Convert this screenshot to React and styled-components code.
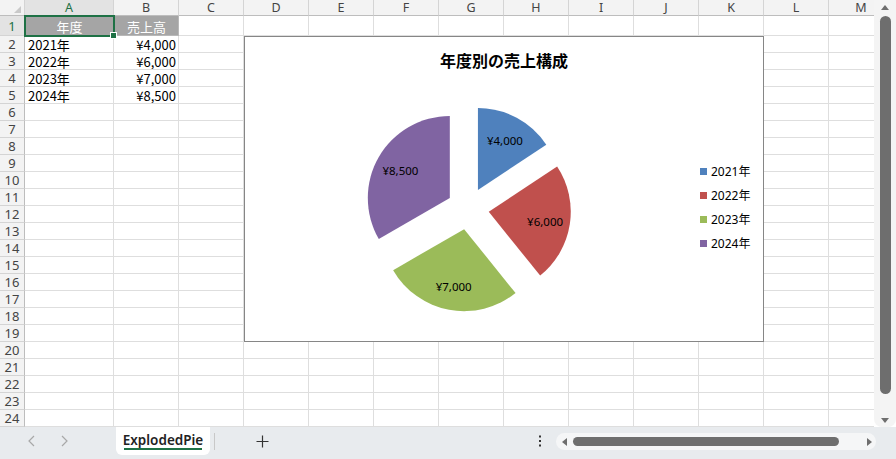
import React from 'react';
import styled, { createGlobalStyle } from 'styled-components';

const Global = createGlobalStyle`
  html, body { margin: 0; padding: 0; background: #fff; overflow: hidden; }
  body { font-family: "Noto Sans", "Noto Sans CJK JP", sans-serif; }
`;

const Page = styled.div`
  width: 896px;
  height: 459px;
  display: flex;
  flex-direction: column;
  background: #e8ebee;
`;

const Main = styled.div`
  display: flex;
  height: 427px;
  background: #fff;
`;

const SheetArea = styled.div`
  position: relative;
  width: 874px;
  height: 427px;
  overflow: hidden;
`;

const Grid = styled.div`
  display: grid;
  grid-template-columns: 25px 89px repeat(12, 65px);
  grid-template-rows: 16px 20px repeat(23, 17px);
`;

const Corner = styled.div`
  position: relative;
  box-sizing: border-box;
  background: #f3f3f3;
  border-right: 1px solid #d4d4d4;
  border-bottom: 1px solid #bdbdbd;
  &::after {
    content: "";
    position: absolute;
    right: 3px;
    bottom: 2px;
    width: 0;
    height: 0;
    border-left: 7px solid transparent;
    border-bottom: 7px solid #c9c9c9;
  }
`;

const ColHeader = styled.div`
  box-sizing: border-box;
  background: ${p => (p.$active ? '#e3e3e3' : '#f3f3f3')};
  border-right: 1px solid #d4d4d4;
  border-bottom: 1px solid ${p => (p.$active ? '#1e7145' : '#bdbdbd')};
  color: ${p => (p.$active ? '#1e7145' : '#444')};
  font: 12.5px/14px "Noto Sans", sans-serif;
  display: flex;
  align-items: center;
  justify-content: center;
  overflow: hidden;
`;

const RowHeader = styled.div`
  box-sizing: border-box;
  background: ${p => (p.$active ? '#e3e3e3' : '#f3f3f3')};
  border-right: 1px solid ${p => (p.$active ? '#1e7145' : '#bdbdbd')};
  border-bottom: 1px solid #d4d4d4;
  color: ${p => (p.$active ? '#1e7145' : '#444')};
  font: 13px/15px "Noto Sans", sans-serif;
  display: flex;
  align-items: center;
  justify-content: center;
  padding-top: 1px;
  overflow: hidden;
`;

const Cell = styled.div`
  box-sizing: border-box;
  border-right: 1px solid ${p => (p.$head ? '#b8b8b8' : '#dedede')};
  border-bottom: 1px solid ${p => (p.$head ? '#b8b8b8' : '#dedede')};
  background: ${p => (p.$head ? '#a5a5a5' : '#fff')};
  color: ${p => (p.$head ? '#fff' : '#000')};
  font: 13px/15px "Noto Sans CJK JP", sans-serif;
  display: flex;
  align-items: center;
  justify-content: ${p => (p.$align === 'right' ? 'flex-end' : p.$align === 'center' ? 'center' : 'flex-start')};
  padding: 1px 2px 0 3px;
  white-space: nowrap;
  overflow: hidden;
`;

const Selection = styled.div`
  position: absolute;
  left: 24px;
  top: 15px;
  width: 91px;
  height: 22px;
  box-sizing: border-box;
  border: 2px solid #1e7145;
  pointer-events: none;
  &::after {
    content: "";
    position: absolute;
    right: -4px;
    bottom: -4px;
    width: 5px;
    height: 5px;
    background: #1e7145;
    border: 1px solid #fff;
  }
`;

const Chart = styled.div`
  position: absolute;
  left: 244px;
  top: 36px;
  width: 520px;
  height: 306px;
  box-sizing: border-box;
  border: 1px solid #868686;
  background: #fff;
  display: flex;
  flex-direction: column;
`;

const Title = styled.div`
  padding-top: 13px;
  text-align: center;
  font: bold 16px/20px "Noto Sans CJK JP", sans-serif;
  color: #000;
`;

const ChartBody = styled.div`
  flex: 1;
  display: flex;
`;

const Legend = styled.div`
  margin-left: 15px;
  margin-top: 89px;
  display: flex;
  flex-direction: column;
`;

const LegendItem = styled.div`
  height: 24px;
  display: flex;
  align-items: center;
  gap: 4px;
  font: 12px "Noto Sans", "Noto Sans CJK JP", sans-serif;
  color: #000;
`;

const Swatch = styled.span`
  width: 7px;
  height: 7px;
  background: ${p => p.$color};
`;

const VScroll = styled.div`
  width: 22px;
  height: 427px;
  background: #f4f4f4;
  border-radius: 0 0 8px 8px;
  display: flex;
  flex-direction: column;
  align-items: center;
`;

const ArrowUp = styled.div`
  margin-top: 5px;
  width: 0;
  height: 0;
  border-left: 4px solid transparent;
  border-right: 4px solid transparent;
  border-bottom: 5px solid #6e6e6e;
`;

const ArrowDown = styled.div`
  margin-top: auto;
  margin-bottom: 4px;
  width: 0;
  height: 0;
  border-left: 4px solid transparent;
  border-right: 4px solid transparent;
  border-top: 5px solid #6e6e6e;
`;

const VThumb = styled.div`
  margin-top: 6px;
  width: 11px;
  height: 378px;
  border-radius: 6px;
  background: #6e6e6e;
`;

const Bottom = styled.div`
  height: 32px;
  display: flex;
  align-items: flex-start;
`;

const Nav = styled.div`
  width: 116px;
  height: 28px;
  display: flex;
  align-items: center;
  padding-left: 27px;
  box-sizing: border-box;
  gap: 22px;
  color: #a8a8a8;
`;

const Tab = styled.div`
  width: 94px;
  height: 28px;
  background: #fff;
  border-radius: 0 0 6px 6px;
  display: flex;
  flex-direction: column;
  align-items: center;
  justify-content: center;
  font: 600 13.5px "Noto Sans", sans-serif;
  color: #222;
  position: relative;
  padding-bottom: 2px;
  box-sizing: border-box;
  &::after {
    content: "";
    position: absolute;
    left: 8px;
    right: 8px;
    bottom: 5px;
    height: 2px;
    background: #1e7145;
  }
`;

const Divider = styled.div`
  margin: 6px 0 0 4px;
  width: 1px;
  height: 17px;
  background: #c8c8c8;
`;

const AddButton = styled.div`
  width: 94px;
  height: 28px;
  display: flex;
  align-items: center;
  justify-content: center;
  color: #333;
`;

const Spacer = styled.div`
  flex: 1;
`;

const Dots = styled.div`
  width: 10px;
  height: 28px;
  display: flex;
  align-items: center;
  justify-content: center;
  margin-right: 11px;
`;

const HScroll = styled.div`
  margin-top: 6px;
  width: 320px;
  height: 17px;
  border-radius: 9px;
  background: #f5f6f7;
  display: flex;
  align-items: center;
  padding: 0 4px 0 6px;
  box-sizing: border-box;
  margin-right: 20px;
`;

const ArrowLeft = styled.div`
  width: 0;
  height: 0;
  border-top: 4px solid transparent;
  border-bottom: 4px solid transparent;
  border-right: 5px solid #6e6e6e;
`;

const ArrowRight = styled.div`
  margin-left: auto;
  width: 0;
  height: 0;
  border-top: 4px solid transparent;
  border-bottom: 4px solid transparent;
  border-left: 5px solid #6e6e6e;
`;

const HThumb = styled.div`
  margin-left: 6px;
  width: 266px;
  height: 9px;
  border-radius: 5px;
  background: #6e6e6e;
`;

const columns = ['A', 'B', 'C', 'D', 'E', 'F', 'G', 'H', 'I', 'J', 'K', 'L', 'M'];

const data = [
  { year: '2021年', value: 4000, text: '¥4,000', color: '#4F81BD' },
  { year: '2022年', value: 6000, text: '¥6,000', color: '#C0504D' },
  { year: '2023年', value: 7000, text: '¥7,000', color: '#9BBB59' },
  { year: '2024年', value: 8500, text: '¥8,500', color: '#8064A2' },
];

function Pie() {
  const cx = 223;
  const cy = 138.5;
  const r = 82;
  const d = 21;
  const total = data.reduce((s, x) => s + x.value, 0);
  let start = 0;
  const slices = data.map(s => {
    const a0 = start;
    const a1 = start + (s.value / total) * Math.PI * 2;
    start = a1;
    const mid = (a0 + a1) / 2;
    const ox = cx + d * Math.sin(mid);
    const oy = cy - d * Math.cos(mid);
    const x0 = ox + r * Math.sin(a0);
    const y0 = oy - r * Math.cos(a0);
    const x1 = ox + r * Math.sin(a1);
    const y1 = oy - r * Math.cos(a1);
    const large = a1 - a0 > Math.PI ? 1 : 0;
    const path = `M${ox.toFixed(2)} ${oy.toFixed(2)} L${x0.toFixed(2)} ${y0.toFixed(2)} A${r} ${r} 0 ${large} 1 ${x1.toFixed(2)} ${y1.toFixed(2)} Z`;
    const lx = cx + 78 * Math.sin(mid);
    const ly = cy - 78 * Math.cos(mid) + 1;
    return { ...s, path, lx, ly };
  });
  return (
    <svg width="440" height="271" viewBox="0 0 440 271">
      {slices.map(s => (
        <path key={s.year} d={s.path} fill={s.color} />
      ))}
      {slices.map(s => (
        <text
          key={s.year + 't'}
          x={s.lx}
          y={s.ly}
          textAnchor="middle"
          dominantBaseline="central"
          fontFamily='"Noto Sans", sans-serif'
          fontSize="11.5"
          fill="#000"
        >
          {s.text}
        </text>
      ))}
    </svg>
  );
}

function Chevron({ dir }) {
  return (
    <svg width="10" height="12" viewBox="0 0 10 12">
      <path
        d={dir === 'left' ? 'M7 1 L2 6 L7 11' : 'M3 1 L8 6 L3 11'}
        fill="none"
        stroke="currentColor"
        strokeWidth="1.2"
      />
    </svg>
  );
}

export default function App() {
  const rows = [];
  for (let r = 1; r <= 24; r++) {
    rows.push(
      <RowHeader key={`h${r}`} $active={r === 1}>
        {r}
      </RowHeader>
    );
    columns.forEach((c, ci) => {
      let content = '';
      let head = false;
      let align = 'left';
      if (r === 1 && ci === 0) { content = '年度'; head = true; align = 'center'; }
      if (r === 1 && ci === 1) { content = '売上高'; head = true; align = 'center'; }
      if (r >= 2 && r <= 5) {
        const item = data[r - 2];
        if (ci === 0) content = item.year;
        if (ci === 1) { content = item.text; align = 'right'; }
      }
      rows.push(
        <Cell key={`${c}${r}`} $head={head} $align={align}>
          {content}
        </Cell>
      );
    });
  }

  return (
    <Page>
      <Global />
      <Main>
        <SheetArea>
          <Grid>
            <Corner />
            {columns.map(c => (
              <ColHeader key={c} $active={c === 'A'}>{c}</ColHeader>
            ))}
            {rows}
          </Grid>
          <Selection />
          <Chart>
            <Title>年度別の売上構成</Title>
            <ChartBody>
              <Pie />
              <Legend>
                {data.map(d => (
                  <LegendItem key={d.year}>
                    <Swatch $color={d.color} />
                    {d.year}
                  </LegendItem>
                ))}
              </Legend>
            </ChartBody>
          </Chart>
        </SheetArea>
        <VScroll>
          <ArrowUp />
          <VThumb />
          <ArrowDown />
        </VScroll>
      </Main>
      <Bottom>
        <Nav>
          <Chevron dir="left" />
          <Chevron dir="right" />
        </Nav>
        <Tab>ExplodedPie</Tab>
        <Divider />
        <AddButton>
          <svg width="13" height="13" viewBox="0 0 13 13">
            <path d="M6.5 0.5 V12.5 M0.5 6.5 H12.5" stroke="#333" strokeWidth="1.2" />
          </svg>
        </AddButton>
        <Spacer />
        <Dots>
          <svg width="4" height="12" viewBox="0 0 4 12">
            <rect x="1" y="0.5" width="2" height="2" fill="#333" />
            <rect x="1" y="5" width="2" height="2" fill="#333" />
            <rect x="1" y="9.5" width="2" height="2" fill="#333" />
          </svg>
        </Dots>
        <HScroll>
          <ArrowLeft />
          <HThumb />
          <ArrowRight />
        </HScroll>
      </Bottom>
    </Page>
  );
}
